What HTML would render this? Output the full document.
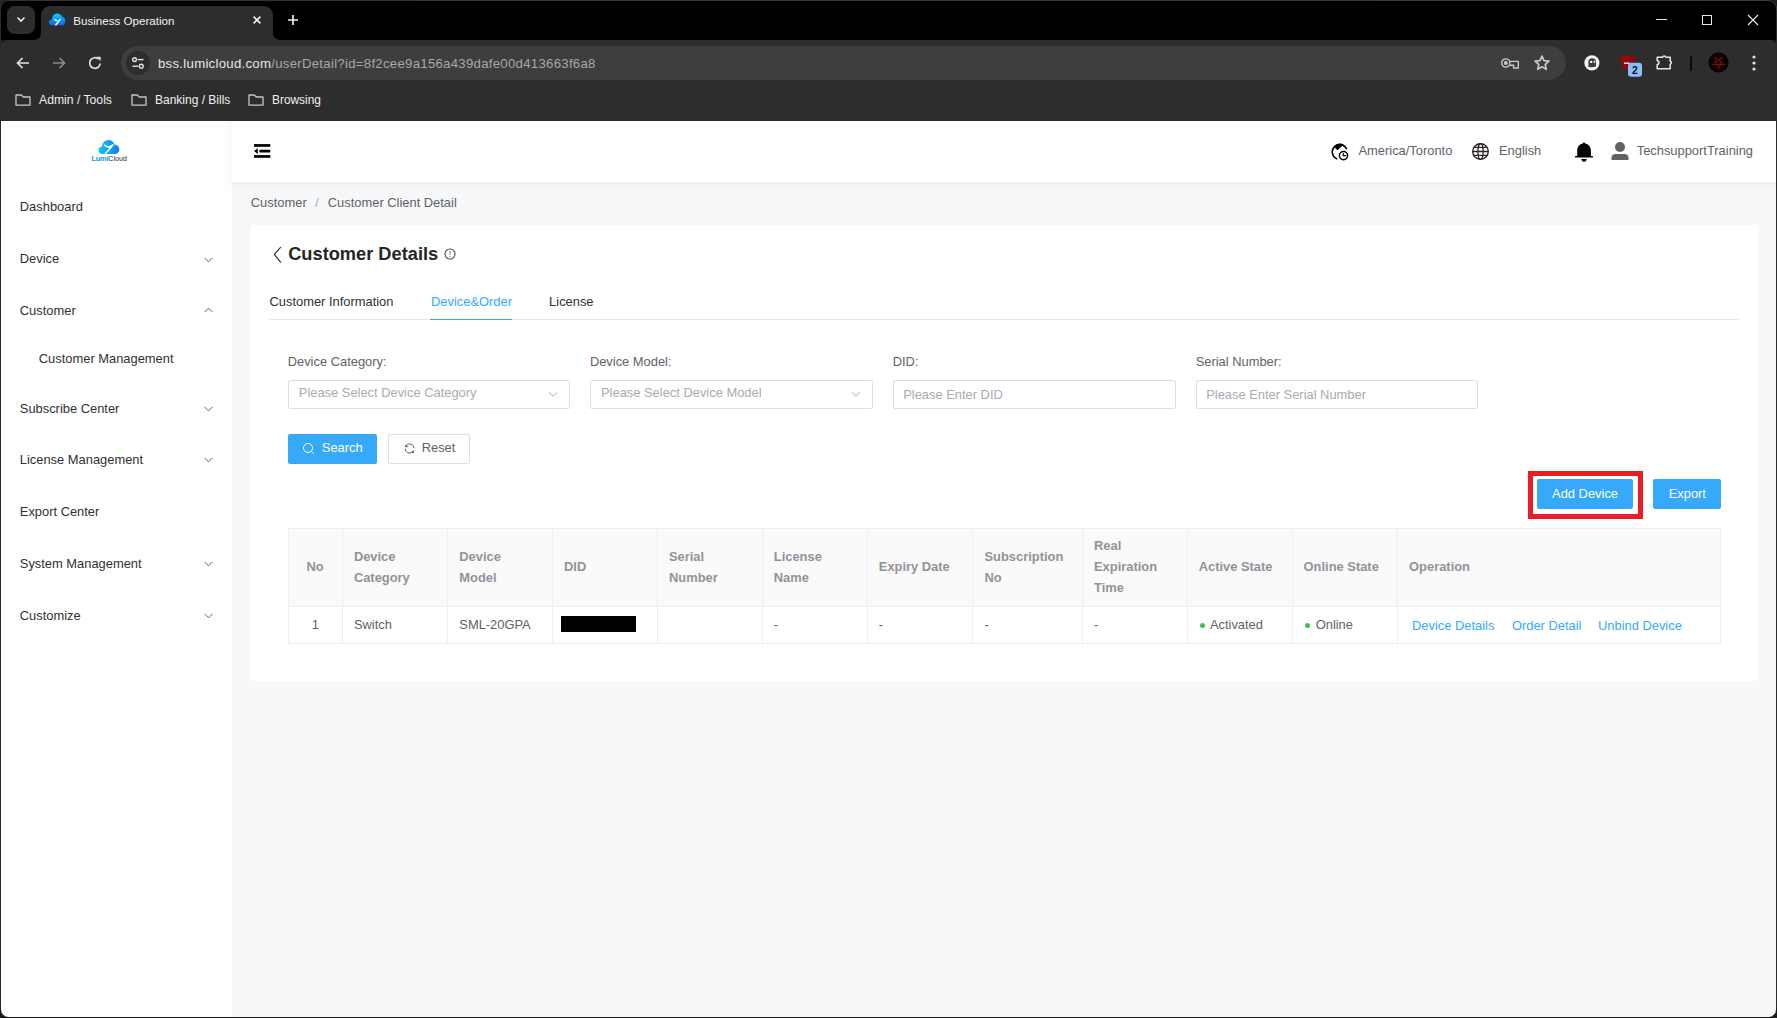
<!DOCTYPE html><html><head><meta charset="utf-8"><style>
html,body{margin:0;padding:0;width:1777px;height:1018px;overflow:hidden;background:#1a1a1a;}
body{position:relative;font-family:"Liberation Sans",sans-serif;}
.t{position:absolute;white-space:nowrap;}
.r{position:absolute;}
#win{position:absolute;left:0;top:0;width:1777px;height:1018px;}
</style></head><body><div id="win">
<div class="r" style="left:0px;top:0px;width:1777px;height:40px;background:#000;"></div>
<div class="r" style="left:0px;top:40px;width:1777px;height:81px;background:#2d2d2d;border-radius:8px 8px 0 0;"></div>
<div class="r" style="left:7px;top:6px;width:28px;height:28px;background:#2d2d2d;border-radius:8px;"></div>
<svg class="r" style="left:14px;top:12px" width="14" height="14" viewBox="0 0 14 14"><path d="M3.5 5.5 L7 9 L10.5 5.5" stroke="#e8e8e8" stroke-width="1.6" fill="none"/></svg>
<div class="r" style="left:41px;top:6px;width:232px;height:40px;background:#2d2d2d;border-radius:9px 9px 0 0;"></div>
<svg class="r" style="left:33px;top:32px" width="8" height="8" viewBox="0 0 8 8"><path d="M0 8 Q8 8 8 0 L8 8 Z" fill="#2d2d2d"/></svg>
<svg class="r" style="left:273px;top:32px" width="8" height="8" viewBox="0 0 8 8"><path d="M8 8 Q0 8 0 0 L0 8 Z" fill="#2d2d2d"/></svg>
<svg class="r" style="left:49px;top:13px" width="17" height="13" viewBox="0 0 17 13"><defs><linearGradient id="fg" x1="0" y1="0" x2="0" y2="1"><stop offset="0" stop-color="#00d8ff"/><stop offset="0.55" stop-color="#0a8cf5"/><stop offset="1" stop-color="#0a6ff0"/></linearGradient></defs><path d="M3.3 12.2 C1.3 12.2 0 11 0 9.3 C0 7.7 1.2 6.6 2.8 6.5 C3 3.3 5.2 0.4 8.2 0.4 C10.5 0.4 12.4 1.8 13.1 3.8 C15.2 4.3 16.3 5.9 16.3 8.2 C16.3 10.4 14.9 12.2 12.8 12.2 Z" fill="url(#fg)"/><path d="M5.3 6.3 L8.4 7.9 M11.5 6 L6.5 12.2" stroke="#fff" stroke-width="1.4" fill="none"/></svg>
<div class="t" style="left:73.30px;top:14.98px;font-size:11.60px;line-height:11.60px;color:#f2f2f2;">Business Operation</div>
<svg class="r" style="left:251px;top:14px" width="12" height="12" viewBox="0 0 12 12"><path d="M2.6 2.6 L9.4 9.4 M9.4 2.6 L2.6 9.4" stroke="#f0f0f0" stroke-width="1.6"/></svg>
<svg class="r" style="left:286px;top:13px" width="14" height="14" viewBox="0 0 14 14"><path d="M7 2 V12 M2 7 H12" stroke="#f0f0f0" stroke-width="1.7"/></svg>
<div class="r" style="left:1656px;top:19px;width:11px;height:1px;background:#e8e8e8;"></div>
<div class="r" style="left:1702px;top:15px;width:10px;height:10px;border:1px solid #e8e8e8;box-sizing:border-box;"></div>
<svg class="r" style="left:1747px;top:14px" width="12" height="12" viewBox="0 0 12 12"><path d="M1 1 L11 11 M11 1 L1 11" stroke="#e8e8e8" stroke-width="1.2"/></svg>
<svg class="r" style="left:14px;top:54px" width="18" height="18" viewBox="0 0 18 18"><path d="M15 9 H3.5 M8.5 4 L3.5 9 L8.5 14" stroke="#e3e3e3" stroke-width="1.7" fill="none"/></svg>
<svg class="r" style="left:50px;top:54px" width="18" height="18" viewBox="0 0 18 18"><path d="M3 9 H14.5 M9.5 4 L14.5 9 L9.5 14" stroke="#8a8a8a" stroke-width="1.7" fill="none"/></svg>
<svg class="r" style="left:86px;top:54px" width="18" height="18" viewBox="0 0 18 18"><path d="M14.2 9.5 A5.3 5.3 0 1 1 12.6 5.2" stroke="#e3e3e3" stroke-width="1.7" fill="none"/><path d="M10.5 2.8 L14.6 2.8 L14.6 6.9 Z" fill="#e3e3e3"/></svg>
<div class="r" style="left:121px;top:46px;width:1445px;height:34px;background:#3e3e3e;border-radius:17px;"></div>
<div class="r" style="left:126px;top:51px;width:24px;height:24px;background:#2d2d2d;border-radius:12px;"></div>
<svg class="r" style="left:130px;top:55px" width="16" height="16" viewBox="0 0 16 16"><circle cx="4.5" cy="4.6" r="1.9" stroke="#e3e3e3" stroke-width="1.4" fill="none"/><path d="M7.6 4.6 H13.5" stroke="#e3e3e3" stroke-width="1.4"/><circle cx="11.3" cy="11.2" r="1.9" stroke="#e3e3e3" stroke-width="1.4" fill="none"/><path d="M2.5 11.2 H8.3" stroke="#e3e3e3" stroke-width="1.4"/></svg>
<div class="t" style="left:158.00px;top:57.43px;font-size:13.20px;line-height:13.20px;color:#e8e8e8;letter-spacing:0.28px;"><span style="color:#e8e8e8">bss.lumicloud.com</span><span style="color:#a8a8a8">/userDetail?id=8f2cee9a156a439dafe00d413663f6a8</span></div>
<svg class="r" style="left:1500px;top:56px" width="20" height="14" viewBox="0 0 20 14"><circle cx="5.8" cy="7" r="4.1" stroke="#c8c8c8" stroke-width="1.4" fill="none"/><circle cx="5.8" cy="7" r="2" fill="#c8c8c8"/><path d="M9.8 5.4 H18.3 V12 H13.6 V9.2 H9.6" stroke="#c8c8c8" stroke-width="1.4" fill="none" stroke-linejoin="round"/></svg>
<svg class="r" style="left:1533px;top:54px" width="18" height="18" viewBox="0 0 18 18"><path d="M9.00 2.10 L11.00 6.65 L15.94 7.14 L12.23 10.45 L13.29 15.31 L9.00 12.80 L4.71 15.31 L5.77 10.45 L2.06 7.14 L7.00 6.65 Z" stroke="#c8c8c8" stroke-width="1.7" fill="none" stroke-linejoin="round"/></svg>
<svg class="r" style="left:1583px;top:55px" width="17" height="17" viewBox="0 0 17 17"><circle cx="8.9" cy="7.8" r="7.6" fill="#f4f4f4"/><path d="M5.4 11.9 V7.1 A3.8 3.8 0 0 1 13 7.1 V11.5 Q9.5 12.6 5.4 11.9 Z" fill="#3c3c3c"/><circle cx="8.1" cy="6.9" r="1.2" fill="#f4f4f4"/><circle cx="11.3" cy="6.7" r="1.05" fill="#f4f4f4"/></svg>
<svg class="r" style="left:1620px;top:54px" width="24" height="24" viewBox="0 0 24 24"><path d="M0.9 2.6 L8 1 L15 2.6 V9.5 C15 12.8 12 15 8 16.3 C4 15 0.9 12.8 0.9 9.5 Z" fill="#8e0a10"/><path d="M4 9.2 H9.5" stroke="#f0e0e0" stroke-width="1.5"/><rect x="8" y="8.8" width="14" height="14" rx="3.2" fill="#8fbcf8"/><text x="14.8" y="19.7" font-family="Liberation Sans" font-size="10.5" font-weight="bold" text-anchor="middle" fill="#111">2</text></svg>
<svg class="r" style="left:1656px;top:54px" width="18" height="17" viewBox="0 0 18 17"><path d="M1.2 3.2 H6.6 A1.7 1.7 0 0 1 9.8 3.2 H14.2 V7 A1.7 1.7 0 0 1 14.2 10.2 V14.8 H1.2 V10.4 A1.7 1.7 0 0 0 1.2 6.8 Z" stroke="#e8e8e8" stroke-width="1.5" fill="none" stroke-linejoin="round"/></svg>
<div class="r" style="left:1690px;top:56px;width:2px;height:15px;background:#0a0a0a;"></div>
<svg class="r" style="left:1707.5px;top:52.3px" width="21" height="21" viewBox="0 0 21 21"><circle cx="10.5" cy="10.5" r="10" fill="#070101"/><circle cx="10.5" cy="10.5" r="8" stroke="#2a0404" stroke-width="0.8" fill="none"/><path d="M10.5 17 L6.68 5.24 L16.68 12.5 L4.32 12.5 L14.32 5.24 Z" stroke="#860c0c" stroke-width="1" fill="none" stroke-linejoin="round"/></svg>
<svg class="r" style="left:1750px;top:55px" width="8" height="16" viewBox="0 0 8 16"><circle cx="4" cy="2" r="1.6" fill="#e3e3e3"/><circle cx="4" cy="8" r="1.6" fill="#e3e3e3"/><circle cx="4" cy="14" r="1.6" fill="#e3e3e3"/></svg>
<svg class="r" style="left:15px;top:93px" width="17" height="13" viewBox="0 0 17 13"><path d="M1 2 H6.3 L8.3 4 H15 V12.2 H1 Z" stroke="#c8c8c8" stroke-width="1.3" fill="none" stroke-linejoin="round"/></svg>
<div class="t" style="left:39.00px;top:94.27px;font-size:12.20px;line-height:12.20px;color:#f0f0f0;">Admin / Tools</div>
<svg class="r" style="left:131px;top:93px" width="17" height="13" viewBox="0 0 17 13"><path d="M1 2 H6.3 L8.3 4 H15 V12.2 H1 Z" stroke="#c8c8c8" stroke-width="1.3" fill="none" stroke-linejoin="round"/></svg>
<div class="t" style="left:155.00px;top:94.44px;font-size:12.00px;line-height:12.00px;color:#f0f0f0;">Banking / Bills</div>
<svg class="r" style="left:248px;top:93px" width="17" height="13" viewBox="0 0 17 13"><path d="M1 2 H6.3 L8.3 4 H15 V12.2 H1 Z" stroke="#c8c8c8" stroke-width="1.3" fill="none" stroke-linejoin="round"/></svg>
<div class="t" style="left:272.00px;top:94.53px;font-size:11.90px;line-height:11.90px;color:#f0f0f0;">Browsing</div>
<div class="r" style="left:0px;top:121px;width:1777px;height:897px;background:#f7f8fa;"></div>
<div class="r" style="left:0px;top:121px;width:232px;height:897px;background:#fff;"></div>
<div class="r" style="left:232px;top:121px;width:1545px;height:61px;background:#fff;box-shadow:0 2px 11px rgba(0,21,41,0.065);"></div>
<svg class="r" style="left:98px;top:139px" width="22" height="16" viewBox="0 0 22 16"><defs><linearGradient id="lg" x1="0" x2="1"><stop offset="0" stop-color="#0bc6fb"/><stop offset="1" stop-color="#1a7cf0"/></linearGradient></defs><path d="M4.2 15 C1.8 15 0.5 13.2 0.5 11.3 C0.5 9.3 2 7.8 3.9 7.6 C4.3 4 6.9 1 10.6 1 C13.4 1 15.7 2.8 16.5 5.4 C19.2 5.6 21.3 7.8 21.3 10.4 C21.3 13 19.2 15 16.6 15 Z" fill="url(#lg)"/><path d="M6 6 L10.5 8.3 L15 5.8 L10.5 11.5 L7 14.6" stroke="#fff" stroke-width="1.5" fill="none" stroke-linejoin="round"/></svg>
<div class="t" style="left:91.4px;top:155px;font-size:7.1px;line-height:8px;"><span style="color:#0b95e0;font-weight:bold;">Lumi</span><span style="color:#2a2a2a;">Cloud</span></div>
<div class="t" style="left:19.80px;top:201.18px;font-size:12.90px;line-height:12.90px;color:#303133;">Dashboard</div>
<div class="t" style="left:19.80px;top:253.08px;font-size:12.90px;line-height:12.90px;color:#303133;">Device</div>
<svg class="r" style="left:204px;top:256.5px" width="9" height="6" viewBox="0 0 9 6"><path d="M0.5 0.8 L4.5 4.8 L8.5 0.8" stroke="#606266" stroke-width="1" fill="none"/></svg>
<div class="t" style="left:19.80px;top:304.88px;font-size:12.90px;line-height:12.90px;color:#303133;">Customer</div>
<svg class="r" style="left:204px;top:306.8px" width="9" height="6" viewBox="0 0 9 6"><path d="M0.5 5.2 L4.5 1.2 L8.5 5.2" stroke="#606266" stroke-width="1" fill="none"/></svg>
<div class="t" style="left:38.80px;top:352.88px;font-size:12.90px;line-height:12.90px;color:#303133;">Customer Management</div>
<div class="t" style="left:19.80px;top:402.88px;font-size:12.90px;line-height:12.90px;color:#303133;">Subscribe Center</div>
<svg class="r" style="left:204px;top:406.3px" width="9" height="6" viewBox="0 0 9 6"><path d="M0.5 0.8 L4.5 4.8 L8.5 0.8" stroke="#606266" stroke-width="1" fill="none"/></svg>
<div class="t" style="left:19.80px;top:453.98px;font-size:12.90px;line-height:12.90px;color:#303133;">License Management</div>
<svg class="r" style="left:204px;top:457.4px" width="9" height="6" viewBox="0 0 9 6"><path d="M0.5 0.8 L4.5 4.8 L8.5 0.8" stroke="#606266" stroke-width="1" fill="none"/></svg>
<div class="t" style="left:19.80px;top:506.18px;font-size:12.90px;line-height:12.90px;color:#303133;">Export Center</div>
<div class="t" style="left:19.80px;top:557.78px;font-size:12.90px;line-height:12.90px;color:#303133;">System Management</div>
<svg class="r" style="left:204px;top:561.2px" width="9" height="6" viewBox="0 0 9 6"><path d="M0.5 0.8 L4.5 4.8 L8.5 0.8" stroke="#606266" stroke-width="1" fill="none"/></svg>
<div class="t" style="left:19.80px;top:609.78px;font-size:12.90px;line-height:12.90px;color:#303133;">Customize</div>
<svg class="r" style="left:204px;top:613.2px" width="9" height="6" viewBox="0 0 9 6"><path d="M0.5 0.8 L4.5 4.8 L8.5 0.8" stroke="#606266" stroke-width="1" fill="none"/></svg>
<svg class="r" style="left:254px;top:144px" width="17" height="14" viewBox="0 0 17 14"><rect x="0" y="0.1" width="16.3" height="2.7" fill="#000"/><rect x="5.4" y="5.7" width="10.8" height="2.9" rx="0.5" fill="#000"/><path d="M0 7.1 L3.8 4.2 V9.9 Z" fill="#000"/><rect x="0" y="11.1" width="16.3" height="2.7" fill="#000"/></svg>
<svg class="r" style="left:1331px;top:143px" width="18" height="18" viewBox="0 0 18 18"><path d="M6.3 15.9 A7.4 7.4 0 1 1 15.6 6.3" stroke="#000" stroke-width="1.6" fill="none"/><path d="M2.6 3.6 C4.3 4.6 5 6.9 6.6 7 C7.8 7 8.2 4.9 10.4 3.8 C11.3 3.3 11.9 2.4 12.4 1.3 C9.2 -0.2 5 0.6 2.6 3.6 Z" fill="#000"/><circle cx="12.5" cy="12.6" r="4.1" fill="#fff" stroke="#000" stroke-width="1.5"/><path d="M12.3 10.3 V12.7 H14.9" stroke="#000" stroke-width="1.3" fill="none"/></svg>
<div class="t" style="left:1358.50px;top:145.08px;font-size:12.90px;line-height:12.90px;color:#606266;">America/Toronto</div>
<svg class="r" style="left:1472px;top:143px" width="17" height="17" viewBox="0 0 17 17"><circle cx="8.5" cy="8.5" r="7.8" stroke="#2b2424" stroke-width="1.35" fill="none"/><ellipse cx="8.5" cy="8.5" rx="2.6" ry="7.8" stroke="#2b2424" stroke-width="1.3" fill="none"/><path d="M0.8 8.5 H16.2 M1.6 4.4 H15.4 M1.6 12.3 H15.4" stroke="#2b2424" stroke-width="1.3"/></svg>
<div class="t" style="left:1499.00px;top:145.08px;font-size:12.90px;line-height:12.90px;color:#606266;">English</div>
<svg class="r" style="left:1575px;top:142px" width="18" height="20" viewBox="0 0 18 20"><path d="M9 0.2 C9.6 0.2 9.9 0.8 9.9 1.5 C13.5 2.2 15.9 4.8 15.9 8.5 V14 H17.9 V15.6 H0.1 V14 H2.2 V8.5 C2.2 4.8 4.5 2.2 8.1 1.5 C8.1 0.8 8.4 0.2 9 0.2 Z" fill="#000"/><path d="M6.2 17 H11.9 L10.8 18.9 C10.4 19.5 9.7 19.8 9 19.8 C8.3 19.8 7.6 19.5 7.2 18.9 Z" fill="#000"/></svg>
<svg class="r" style="left:1611px;top:141px" width="18" height="20" viewBox="0 0 18 20"><circle cx="9" cy="6" r="5" fill="#606266"/><path d="M0.5 19 V16.5 C0.5 14.3 2.2 13 4.5 13 H13.5 C15.8 13 17.5 14.3 17.5 16.5 V19 Z" fill="#606266"/></svg>
<div class="t" style="left:1636.70px;top:145.08px;font-size:12.90px;line-height:12.90px;color:#606266;">TechsupportTraining</div>
<div class="t" style="left:250.80px;top:196.88px;font-size:12.90px;line-height:12.90px;color:#606266;">Customer</div>
<div class="t" style="left:315.00px;top:196.88px;font-size:12.90px;line-height:12.90px;color:#a8abb2;">/</div>
<div class="t" style="left:327.80px;top:196.88px;font-size:12.90px;line-height:12.90px;color:#606266;">Customer Client Detail</div>
<div class="r" style="left:251px;top:225px;width:1507px;height:456px;background:#fff;border-radius:2px;"></div>
<svg class="r" style="left:272px;top:246px" width="11" height="17" viewBox="0 0 11 17"><path d="M8.5 1.4 L2.3 8.3 L8.5 16.2" stroke="#303133" stroke-width="1.2" fill="none" stroke-linecap="round" stroke-linejoin="round"/></svg>
<div class="t" style="left:288.20px;top:244.76px;font-size:18.24px;line-height:18.24px;color:#252525;font-weight:bold;">Customer Details</div>
<svg class="r" style="left:444px;top:248px" width="12" height="12" viewBox="0 0 12 12"><circle cx="6" cy="6" r="5" stroke="#45474b" stroke-width="1.1" fill="none"/><path d="M6 3 V6.8" stroke="#8a8c90" stroke-width="1.2"/><circle cx="6" cy="8.6" r="0.7" fill="#8a8c90"/></svg>
<div class="t" style="left:269.50px;top:295.98px;font-size:12.90px;line-height:12.90px;color:#303133;">Customer Information</div>
<div class="t" style="left:431.00px;top:295.98px;font-size:12.90px;line-height:12.90px;color:#36a9fb;">Device&amp;Order</div>
<div class="t" style="left:549.10px;top:295.98px;font-size:12.90px;line-height:12.90px;color:#303133;">License</div>
<div class="r" style="left:269px;top:319px;width:1470px;height:1px;background:#e4e7ed;"></div>
<div class="r" style="left:430px;top:318.5px;width:82px;height:1.6px;background:#36a9fb;"></div>
<div class="t" style="left:287.70px;top:356.38px;font-size:12.90px;line-height:12.90px;color:#606266;">Device Category:</div>
<div class="r" style="left:288px;top:380px;width:282.4px;height:29px;box-sizing:border-box;border:1px solid #dcdfe6;border-radius:2px;background:#fff;"></div>
<div class="t" style="left:298.80px;top:387.48px;font-size:12.90px;line-height:12.90px;color:#a8abb2;">Please Select Device Category</div>
<svg class="r" style="left:548.3px;top:391px" width="10" height="7" viewBox="0 0 10 7"><path d="M0.8 1.2 L5 5.2 L9.2 1.2" stroke="#a8abb2" stroke-width="1" fill="none"/></svg>
<div class="t" style="left:589.90px;top:356.38px;font-size:12.90px;line-height:12.90px;color:#606266;">Device Model:</div>
<div class="r" style="left:590.2px;top:380px;width:282.4px;height:29px;box-sizing:border-box;border:1px solid #dcdfe6;border-radius:2px;background:#fff;"></div>
<div class="t" style="left:601.00px;top:387.48px;font-size:12.90px;line-height:12.90px;color:#a8abb2;">Please Select Device Model</div>
<svg class="r" style="left:850.5px;top:391px" width="10" height="7" viewBox="0 0 10 7"><path d="M0.8 1.2 L5 5.2 L9.2 1.2" stroke="#a8abb2" stroke-width="1" fill="none"/></svg>
<div class="t" style="left:892.70px;top:356.38px;font-size:12.90px;line-height:12.90px;color:#606266;">DID:</div>
<div class="r" style="left:893px;top:380px;width:283px;height:29px;box-sizing:border-box;border:1px solid #dcdfe6;border-radius:2px;background:#fff;"></div>
<div class="t" style="left:903.20px;top:388.88px;font-size:12.90px;line-height:12.90px;color:#a8abb2;">Please Enter DID</div>
<div class="t" style="left:1195.70px;top:356.38px;font-size:12.90px;line-height:12.90px;color:#606266;">Serial Number:</div>
<div class="r" style="left:1196px;top:380px;width:282.4px;height:29px;box-sizing:border-box;border:1px solid #dcdfe6;border-radius:2px;background:#fff;"></div>
<div class="t" style="left:1206.20px;top:388.88px;font-size:12.90px;line-height:12.90px;color:#a8abb2;">Please Enter Serial Number</div>
<div class="r" style="left:288px;top:434px;width:89px;height:30px;background:#36a9fb;border-radius:2px;"></div>
<svg class="r" style="left:302px;top:443px" width="13" height="12" viewBox="0 0 13 12"><circle cx="6" cy="5" r="4.55" stroke="#fff" stroke-width="1" fill="none"/><path d="M9.3 8.3 L11.8 10.7" stroke="#fff" stroke-width="1"/></svg>
<div class="t" style="left:321.80px;top:441.68px;font-size:12.90px;line-height:12.90px;color:#fff;">Search</div>
<div class="r" style="left:388px;top:434px;width:82px;height:30px;box-sizing:border-box;border:1px solid #dcdfe6;border-radius:2px;background:#fff;"></div>
<svg class="r" style="left:403px;top:442px" width="13" height="13" viewBox="0 0 13 13"><path d="M3.4 3.3 A4.4 4.4 0 0 1 11 6.1" stroke="#606266" stroke-width="1" fill="none"/><path d="M2.1 2.2 L2.4 5.4 L5.4 4.7 Z" fill="#606266"/><path d="M2.2 6.5 A4.4 4.4 0 0 0 9.4 10.1" stroke="#606266" stroke-width="1" fill="none"/><path d="M11.1 7.9 L10.8 11 L7.8 10.6 Z" fill="#606266"/></svg>
<div class="t" style="left:421.70px;top:441.68px;font-size:12.90px;line-height:12.90px;color:#606266;">Reset</div>
<div class="r" style="left:1528px;top:471px;width:115px;height:48px;box-sizing:border-box;border:5px solid #ec1c24;"></div>
<div class="r" style="left:1537px;top:479px;width:96px;height:30px;background:#36a9fb;border-radius:2px;"></div>
<div class="t" style="left:1552.10px;top:487.98px;font-size:12.90px;line-height:12.90px;color:#fff;">Add Device</div>
<div class="r" style="left:1653px;top:479px;width:68px;height:30px;background:#36a9fb;border-radius:2px;"></div>
<div class="t" style="left:1668.70px;top:487.98px;font-size:12.90px;line-height:12.90px;color:#fff;">Export</div>
<div class="r" style="left:288px;top:528px;width:1433px;height:78px;background:#fafafa;"></div>
<div class="r" style="left:288px;top:606px;width:1433px;height:37px;background:#fff;"></div>
<div class="r" style="left:288px;top:528px;width:1433px;height:1px;background:#ebeef5;"></div>
<div class="r" style="left:288px;top:605.5px;width:1433px;height:1px;background:#ebeef5;"></div>
<div class="r" style="left:288px;top:642.5px;width:1433px;height:1px;background:#ebeef5;"></div>
<div class="r" style="left:288px;top:528px;width:1px;height:115px;background:#ebeef5;"></div>
<div class="r" style="left:342px;top:528px;width:1px;height:115px;background:#ebeef5;"></div>
<div class="r" style="left:447px;top:528px;width:1px;height:115px;background:#ebeef5;"></div>
<div class="r" style="left:552px;top:528px;width:1px;height:115px;background:#ebeef5;"></div>
<div class="r" style="left:657px;top:528px;width:1px;height:115px;background:#ebeef5;"></div>
<div class="r" style="left:762px;top:528px;width:1px;height:115px;background:#ebeef5;"></div>
<div class="r" style="left:867px;top:528px;width:1px;height:115px;background:#ebeef5;"></div>
<div class="r" style="left:972px;top:528px;width:1px;height:115px;background:#ebeef5;"></div>
<div class="r" style="left:1082px;top:528px;width:1px;height:115px;background:#ebeef5;"></div>
<div class="r" style="left:1187px;top:528px;width:1px;height:115px;background:#ebeef5;"></div>
<div class="r" style="left:1292px;top:528px;width:1px;height:115px;background:#ebeef5;"></div>
<div class="r" style="left:1397px;top:528px;width:1px;height:115px;background:#ebeef5;"></div>
<div class="r" style="left:1720px;top:528px;width:1px;height:115px;background:#ebeef5;"></div>
<div class="t" style="left:306.40px;top:561.08px;font-size:12.90px;line-height:12.90px;color:#909399;font-weight:bold;">No</div>
<div class="t" style="left:353.90px;top:550.58px;font-size:12.90px;line-height:12.90px;color:#909399;font-weight:bold;">Device</div>
<div class="t" style="left:353.90px;top:571.58px;font-size:12.90px;line-height:12.90px;color:#909399;font-weight:bold;">Category</div>
<div class="t" style="left:459.30px;top:550.58px;font-size:12.90px;line-height:12.90px;color:#909399;font-weight:bold;">Device</div>
<div class="t" style="left:459.30px;top:571.58px;font-size:12.90px;line-height:12.90px;color:#909399;font-weight:bold;">Model</div>
<div class="t" style="left:564.00px;top:561.08px;font-size:12.90px;line-height:12.90px;color:#909399;font-weight:bold;">DID</div>
<div class="t" style="left:669.00px;top:550.58px;font-size:12.90px;line-height:12.90px;color:#909399;font-weight:bold;">Serial</div>
<div class="t" style="left:669.00px;top:571.58px;font-size:12.90px;line-height:12.90px;color:#909399;font-weight:bold;">Number</div>
<div class="t" style="left:773.80px;top:550.58px;font-size:12.90px;line-height:12.90px;color:#909399;font-weight:bold;">License</div>
<div class="t" style="left:773.80px;top:571.58px;font-size:12.90px;line-height:12.90px;color:#909399;font-weight:bold;">Name</div>
<div class="t" style="left:878.80px;top:561.08px;font-size:12.90px;line-height:12.90px;color:#909399;font-weight:bold;">Expiry Date</div>
<div class="t" style="left:984.50px;top:550.58px;font-size:12.90px;line-height:12.90px;color:#909399;font-weight:bold;">Subscription</div>
<div class="t" style="left:984.50px;top:571.58px;font-size:12.90px;line-height:12.90px;color:#909399;font-weight:bold;">No</div>
<div class="t" style="left:1094.00px;top:540.08px;font-size:12.90px;line-height:12.90px;color:#909399;font-weight:bold;">Real</div>
<div class="t" style="left:1094.00px;top:561.08px;font-size:12.90px;line-height:12.90px;color:#909399;font-weight:bold;">Expiration</div>
<div class="t" style="left:1094.00px;top:582.08px;font-size:12.90px;line-height:12.90px;color:#909399;font-weight:bold;">Time</div>
<div class="t" style="left:1198.70px;top:561.08px;font-size:12.90px;line-height:12.90px;color:#909399;font-weight:bold;">Active State</div>
<div class="t" style="left:1303.60px;top:561.08px;font-size:12.90px;line-height:12.90px;color:#909399;font-weight:bold;">Online State</div>
<div class="t" style="left:1409.10px;top:561.08px;font-size:12.90px;line-height:12.90px;color:#909399;font-weight:bold;">Operation</div>
<div class="t" style="left:311.70px;top:619.18px;font-size:12.90px;line-height:12.90px;color:#606266;">1</div>
<div class="t" style="left:353.90px;top:619.18px;font-size:12.90px;line-height:12.90px;color:#606266;">Switch</div>
<div class="t" style="left:459.30px;top:619.18px;font-size:12.90px;line-height:12.90px;color:#606266;">SML-20GPA</div>
<div class="r" style="left:561px;top:616px;width:75px;height:16px;background:#000;"></div>
<div class="t" style="left:773.80px;top:619.18px;font-size:12.90px;line-height:12.90px;color:#606266;">-</div>
<div class="t" style="left:878.80px;top:619.18px;font-size:12.90px;line-height:12.90px;color:#606266;">-</div>
<div class="t" style="left:984.50px;top:619.18px;font-size:12.90px;line-height:12.90px;color:#606266;">-</div>
<div class="t" style="left:1094.00px;top:619.18px;font-size:12.90px;line-height:12.90px;color:#606266;">-</div>
<div class="r" style="left:1200px;top:622.8px;width:5.4px;height:5.4px;border-radius:50%;background:#3cc04e;"></div>
<div class="t" style="left:1209.90px;top:619.18px;font-size:12.90px;line-height:12.90px;color:#606266;">Activated</div>
<div class="r" style="left:1305px;top:622.8px;width:5.4px;height:5.4px;border-radius:50%;background:#3cc04e;"></div>
<div class="t" style="left:1315.70px;top:619.18px;font-size:12.90px;line-height:12.90px;color:#606266;">Online</div>
<div class="t" style="left:1412.00px;top:620.08px;font-size:12.90px;line-height:12.90px;color:#36a9fb;">Device Details</div>
<div class="t" style="left:1511.90px;top:620.08px;font-size:12.90px;line-height:12.90px;color:#36a9fb;">Order Detail</div>
<div class="t" style="left:1598.00px;top:620.08px;font-size:12.90px;line-height:12.90px;color:#36a9fb;">Unbind Device</div>
<div class="r" style="left:0;top:0;width:1777px;height:1018px;box-sizing:border-box;border:1px solid #1a1a1a;border-top:none;border-left-color:#2e2628;border-right-color:#2c2c2c;pointer-events:none;"></div>
<div class="r" style="left:8px;top:0;width:1761px;height:1px;background:linear-gradient(90deg,#3a2e30,#383434 50%,#3c3c3c);"></div>
<svg class="r" style="left:0;top:0" width="10" height="10" viewBox="0 0 10 10"><path d="M0 0 H10 V0.5 H8.5 A8 8 0 0 0 0.5 8.5 V10 H0 Z" fill="#2a2022"/><path d="M0.5 10 V8.5 A8 8 0 0 1 8.5 0.5 H10" stroke="#3a2e30" stroke-width="1" fill="none"/></svg>
<svg class="r" style="left:1767px;top:0" width="10" height="10" viewBox="0 0 10 10"><path d="M10 0 H0 V0.5 H1.5 A8 8 0 0 1 9.5 8.5 V10 H10 Z" fill="#1a1a1a"/><path d="M9.5 10 V8.5 A8 8 0 0 0 1.5 0.5 H0" stroke="#3c3c3c" stroke-width="1" fill="none"/></svg>
<svg class="r" style="left:0;top:1008px" width="10" height="10" viewBox="0 0 10 10"><path d="M0 10 H10 V9.5 H8.5 A8 8 0 0 1 0.5 1.5 V0 H0 Z" fill="#1a1a1a"/><path d="M0.5 0 V1.5 A8 8 0 0 0 8.5 9.5 H10" stroke="#1a1a1a" stroke-width="1" fill="none"/></svg>
<svg class="r" style="left:1767px;top:1008px" width="10" height="10" viewBox="0 0 10 10"><path d="M10 10 H0 V9.5 H1.5 A8 8 0 0 0 9.5 1.5 V0 H10 Z" fill="#1a1a1a"/><path d="M9.5 0 V1.5 A8 8 0 0 1 1.5 9.5 H0" stroke="#1a1a1a" stroke-width="1" fill="none"/></svg>
</div></body></html>
